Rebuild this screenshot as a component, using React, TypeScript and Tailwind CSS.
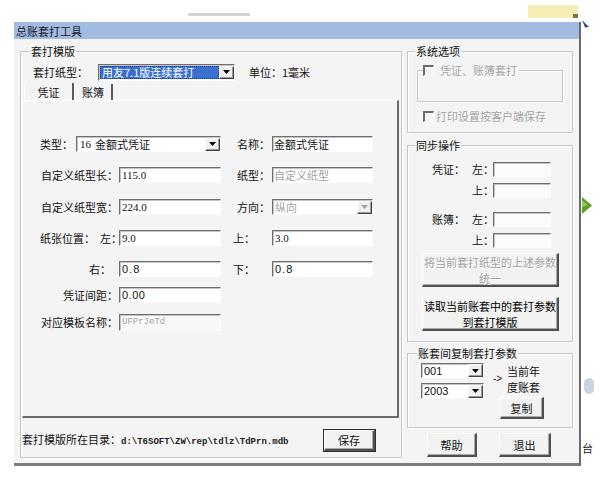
import React from "react";

const SUNK =
  "flex items-center overflow-hidden whitespace-nowrap shrink-0 border-t border-l border-b border-r border-t-[#6f6f6f] border-l-[#6f6f6f] border-b-[#fdfdfd] border-r-[#fdfdfd] shadow-[inset_1px_1px_0_#c4c4c4]";
const RAISED =
  "flex flex-col items-center justify-center shrink-0 bg-[#f2f2f2] border-t border-l border-b-2 border-r-2 border-t-white border-l-white border-b-[#505050] border-r-[#505050] shadow-[inset_-1px_-1px_0_#a8a8a8]";
const SMALLBTN =
  "flex items-center justify-center shrink-0 bg-[#f0f0f0] border border-t-[#ffffff] border-l-[#ffffff] border-b-[#404040] border-r-[#404040] shadow-[inset_-1px_-1px_0_#9c9c9c]";
const DIS = "text-[#a2a2a2] [text-shadow:1px_1px_0_#ffffff]";
const ETCH = "border border-[#c6c6c6] shadow-[inset_1px_1px_0_#ffffff,1px_1px_0_#ffffff]";
const BG = "bg-[#f4f4f4]";

function Arrow({ c = "#000" }: { c?: string }) {
  return (
    <svg width="7" height="4" viewBox="0 0 7 4">
      <path d="M0 0H7L3.5 4Z" fill={c} />
    </svg>
  );
}

function DropBtn({ dis }: { dis?: boolean }) {
  return (
    <div className={`ml-auto w-[15px] h-[13px] ${SMALLBTN}`}>
      <Arrow c={dis ? "#a0a0a0" : "#000"} />
    </div>
  );
}

function Check() {
  return (
    <div className="w-[11px] h-[11px] shrink-0 border-t-2 border-l-2 border-t-[#6b6b6b] border-l-[#6b6b6b] border-b border-r border-b-white border-r-white" />
  );
}

function Group({
  title,
  className,
  titleCls = "ml-[7px]",
  children,
}: {
  title: string;
  className: string;
  titleCls?: string;
  children?: React.ReactNode;
}) {
  return (
    <div className={`${ETCH} ${className} flex flex-col`}>
      <div className={`-mt-[8px] ${titleCls} w-fit px-[1px] ${BG} h-[14px] leading-[14px] whitespace-nowrap`}>
        {title}
      </div>
      {children}
    </div>
  );
}

const SERIF = "font-['Liberation_Serif','Noto_Sans_CJK_SC',serif]";
const SANS = "font-['Liberation_Sans','Noto_Sans_CJK_SC',sans-serif]";

function LeftGroup() {
  return (
    <Group title="套打模版" className="w-[382px] h-[407px]" titleCls="ml-[9px]">
      {/* paper type */}
      <div className="mt-[6px] h-[16px] flex items-center">
        <div className="ml-[12px] w-[65px] shrink-0">套打纸型：</div>
        <div className={`${SUNK} w-[137px] h-[17px] bg-white`}>
          <div className="ml-[1px] w-[119px] h-[13px] bg-[#3a6fd0] text-white pl-[2px] leading-[13px] outline-1 outline-dotted outline-[#1b3f8a] -outline-offset-1">
            用友7.1版连续套打
          </div>
          <DropBtn />
        </div>
        <div className="ml-[14px] whitespace-nowrap">单位：1毫米</div>
      </div>
      {/* tabs */}
      <div className="mt-[5px] h-[15px] flex items-end ml-[3px]">
        <div className="w-[50px] h-[17px] flex items-center justify-center border-r-2 border-r-[#5a5a5a] border-l border-l-white">
          凭证
        </div>
        <div className="w-[39px] h-[16px] flex items-center justify-center border-r-2 border-r-[#5a5a5a] border-l border-l-white">
          账簿
        </div>
      </div>
      {/* tab panel */}
      <div className="ml-[1px] w-[377px] h-[318px] border-t border-l border-t-white border-l-white border-r-2 border-b-2 border-r-[#6a6a6a] border-b-[#6a6a6a] flex flex-col">
        <div className="mt-[35px] h-[16px] flex items-center pl-[17px]">
          <div className="w-[36px] shrink-0">类型：</div>
          <div className={`${SUNK} w-[145px] h-[16px] bg-white pl-[3px]`}>
            <span className={SERIF}>16</span>
            <span className="ml-[4px]">金额式凭证</span>
            <DropBtn />
          </div>
          <div className="w-[51px] pl-[16px] shrink-0">名称：</div>
          <div className={`${SUNK} w-[101px] h-[16px] bg-white pl-[1px]`}>金额式凭证</div>
        </div>

        <div className="mt-[15px] h-[16px] flex items-center pl-[17px]">
          <div className="w-[79px] text-right pr-[1px] shrink-0 whitespace-nowrap">自定义纸型长：</div>
          <div className={`${SUNK} w-[102px] h-[16px] bg-white pl-[2px] ${SERIF}`}>115.0</div>
          <div className="w-[51px] pl-[16px] shrink-0">纸型：</div>
          <div className={`${SUNK} w-[101px] h-[16px] bg-white pl-[1px] ${DIS}`}>自定义纸型</div>
        </div>

        <div className="mt-[16px] h-[16px] flex items-center pl-[17px]">
          <div className="w-[79px] text-right pr-[1px] shrink-0 whitespace-nowrap">自定义纸型宽：</div>
          <div className={`${SUNK} w-[102px] h-[16px] bg-white pl-[2px] ${SERIF}`}>224.0</div>
          <div className="w-[51px] pl-[16px] shrink-0">方向：</div>
          <div className={`${SUNK} w-[101px] h-[16px] bg-white pl-[2px]`}>
            <span className={DIS}>纵向</span>
            <DropBtn dis />
          </div>
        </div>

        <div className="mt-[15px] h-[16px] flex items-center pl-[17px]">
          <div className="w-[79px] shrink-0 whitespace-nowrap">
            纸张位置：<span className="ml-[5px]">左：</span>
          </div>
          <div className={`${SUNK} w-[102px] h-[16px] bg-white pl-[2px] ${SERIF}`}>9.0</div>
          <div className="w-[51px] pl-[12px] shrink-0">上：</div>
          <div className={`${SUNK} w-[101px] h-[16px] bg-white pl-[2px] ${SERIF}`}>3.0</div>
        </div>

        <div className="mt-[15px] h-[16px] flex items-center pl-[17px]">
          <div className="w-[79px] text-right pr-[8px] shrink-0 whitespace-nowrap">右：</div>
          <div className={`${SUNK} w-[102px] h-[16px] bg-white pl-[2px] ${SANS} tracking-[1px]`}>0.8</div>
          <div className="w-[51px] pl-[12px] shrink-0">下：</div>
          <div className={`${SUNK} w-[101px] h-[16px] bg-white pl-[2px] ${SANS} tracking-[1px]`}>0.8</div>
        </div>

        <div className="mt-[10px] h-[16px] flex items-center pl-[17px]">
          <div className="w-[79px] text-right pr-[1px] shrink-0 whitespace-nowrap">凭证间距：</div>
          <div className={`${SUNK} w-[102px] h-[16px] bg-white pl-[2px] ${SANS} tracking-[0.5px]`}>0.00</div>
        </div>

        <div className="mt-[11px] h-[16px] flex items-center pl-[17px]">
          <div className="w-[79px] text-right pr-[1px] shrink-0 whitespace-nowrap">对应模板名称：</div>
          <div
            className={`${SUNK} w-[102px] h-[17px] bg-[#f8f8f8] pl-[2px] font-['Liberation_Mono',monospace] text-[9px] ${DIS}`}
          >
            UFPrJeTd
          </div>
        </div>
      </div>
      {/* footer */}
      <div className="mt-[11px] h-[23px] flex items-center">
        <div className="w-[302px] pl-[1px] whitespace-nowrap shrink-0">
          套打模版所在目录：
          <span className="font-['Liberation_Mono',monospace] text-[9px] font-bold text-[#222]">
            {"d:\\T6SOFT\\ZW\\rep\\tdlz\\TdPrn.mdb"}
          </span>
        </div>
        <div className="w-[53px] h-[23px] border border-[#2e2e2e] flex shrink-0">
          <div className={`${RAISED} w-full h-full`}>保存</div>
        </div>
      </div>
    </Group>
  );
}

function RightCol() {
  return (
    <div className="ml-[5px] w-[166px] flex flex-col shrink-0">
      <Group title="系统选项" className="h-[82px]">
        <div className={`mt-[12px] ml-[9px] w-[146px] h-[32px] ${ETCH}`}>
          <div className={`-mt-[8px] ml-[5px] w-fit pr-[2px] ${BG} flex items-center h-[14px]`}>
            <Check />
            <span className={`ml-[6px] whitespace-nowrap ${DIS}`}>凭证、账簿套打</span>
          </div>
        </div>
        <div className="mt-[7px] ml-[15px] flex items-center h-[14px]">
          <Check />
          <span className={`ml-[2px] whitespace-nowrap ${DIS}`}>打印设置按客户端保存</span>
        </div>
      </Group>

      <Group title="同步操作" className="mt-[12px] h-[197px]">
        <div className="mt-[10px] h-[14px] flex items-center">
          <div className="w-[64px] pl-[24px] shrink-0 whitespace-nowrap">凭证：</div>
          <div className="w-[21px] shrink-0 whitespace-nowrap">左：</div>
          <div className={`${SUNK} w-[58px] h-[15px] bg-[#fbfbfb]`} />
        </div>
        <div className="mt-[7px] h-[14px] flex items-center">
          <div className="w-[64px] shrink-0" />
          <div className="w-[21px] shrink-0 whitespace-nowrap">上：</div>
          <div className={`${SUNK} w-[58px] h-[15px] bg-[#fbfbfb]`} />
        </div>
        <div className="mt-[15px] h-[14px] flex items-center">
          <div className="w-[64px] pl-[24px] shrink-0 whitespace-nowrap">账簿：</div>
          <div className="w-[21px] shrink-0 whitespace-nowrap">左：</div>
          <div className={`${SUNK} w-[58px] h-[15px] bg-[#fbfbfb]`} />
        </div>
        <div className="mt-[7px] h-[14px] flex items-center">
          <div className="w-[64px] shrink-0" />
          <div className="w-[21px] shrink-0 whitespace-nowrap">上：</div>
          <div className={`${SUNK} w-[58px] h-[15px] bg-[#fbfbfb]`} />
        </div>
        <div className={`mt-[6px] ml-[14px] w-[137px] h-[34px] ${RAISED} leading-[16px] whitespace-nowrap ${DIS}`}>
          <span className="h-[16px] shrink-0">将当前套打纸型的上述参数</span>
          <span className="h-[16px] shrink-0">统一</span>
        </div>
        <div className={`mt-[10px] ml-[14px] w-[137px] h-[34px] ${RAISED} leading-[16px] whitespace-nowrap text-black`}>
          <span className="h-[16px] shrink-0">读取当前账套中的套打参数</span>
          <span className="h-[16px] shrink-0">到套打模版</span>
        </div>
      </Group>

      <Group title="账套间复制套打参数" className="mt-[11px] h-[75px]" titleCls="ml-[9px]">
        <div className="mt-[3px] flex">
          <div className="ml-[13px] flex flex-col gap-[5px]">
            <div className={`${SUNK} w-[63px] h-[15px] bg-white pl-[2px] ${SANS}`}>
              001
              <DropBtn />
            </div>
            <div className={`${SUNK} w-[63px] h-[16px] bg-white pl-[2px] ${SANS}`}>
              2003
              <DropBtn />
            </div>
          </div>
          <div className="ml-[9px] flex flex-col">
            <div className="flex items-center">
              <span className={`w-[14px] shrink-0 ${SANS} text-[10px]`}>-&gt;</span>
              <div className="leading-[16px] whitespace-nowrap">
                <div className="h-[16px]">当前年</div>
                <div className="h-[16px]">度账套</div>
              </div>
            </div>
            <div className={`mt-[2px] ml-[7px] w-[44px] h-[22px] ${RAISED}`}>复制</div>
          </div>
        </div>
      </Group>

      <div className="mt-[5px] flex">
        <div className={`ml-[20px] w-[50px] h-[24px] ${RAISED}`}>帮助</div>
        <div className={`ml-[22px] w-[52px] h-[24px] ${RAISED}`}>退出</div>
      </div>
    </div>
  );
}

export default function App() {
  return (
    <div className="w-[600px] h-[484px] bg-white overflow-hidden flex flex-col text-[11px] leading-[14px] text-[#111] font-['Noto_Sans_CJK_SC',sans-serif]">
      {/* desktop strip above the dialog */}
      <div className="h-[22px] flex shrink-0">
        <div className="ml-[188px] mt-[13px] w-[62px] h-[3px] bg-[#d2d2d2] rounded-[1px]" />
        <div className="ml-[278px] mt-[5px] w-[50px] h-[13px] bg-[#f5efb6] flex items-end justify-end">
          <div className="w-[5px] h-[4px] bg-[#7a7450]" />
        </div>
      </div>
      <div className="flex">
        {/* dialog */}
        <div className={`ml-[14px] w-[567px] h-[444px] flex flex-col ${BG} border-r-2 border-b-[3px] border-r-[#6a6a6a] border-b-[#7c7c7c]`}>
          <div className="h-[17px] bg-[#a3bbe1] pl-[2px] flex items-center text-[#16182a] shrink-0">
            总账套打工具
          </div>
          <div className="flex pl-[6px] pt-[12px]">
            <LeftGroup />
            <RightCol />
          </div>
        </div>
        {/* desktop strip right of the dialog */}
        <div className="w-[19px] flex flex-col">
          <svg width="8" height="10" viewBox="0 0 8 10" className="-mt-[2px] ml-[1px]">
            <path d="M0 0L7 7L3 7.5Z" fill="#2f4f8c" />
          </svg>
          <svg width="10" height="17" viewBox="0 0 10 17" className="mt-[167px] ml-[1px]">
            <path d="M0 0L10 8.5L0 17Z" fill="#5c9f25" />
            <path d="M0 3L6 8.5L0 10Z" fill="#8cc84a" />
          </svg>
          <div className="mt-[164px] ml-[3px] w-[10px] h-[16px] rounded-[5px] bg-[#c9d5e3]" />
          <div className="mt-[47px] ml-[1px] text-[11px] text-[#222]">台</div>
        </div>
      </div>
    </div>
  );
}
